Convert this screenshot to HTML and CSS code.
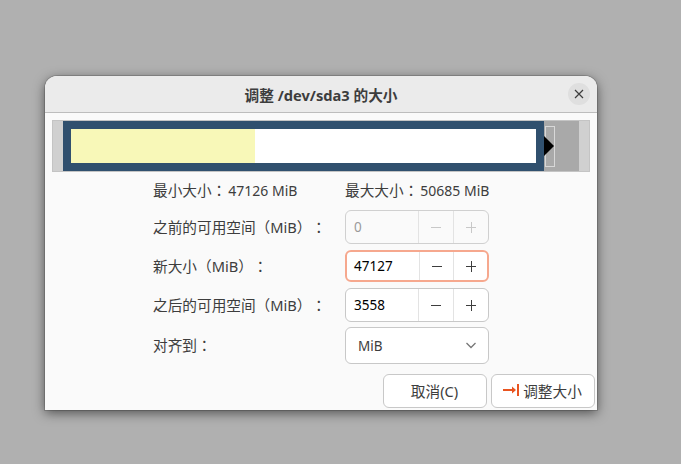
FILE: index.html
```html
<!DOCTYPE html>
<html lang="ja">
<head>
<meta charset="utf-8">
<title>调整 /dev/sda3 的大小</title>
<link rel="stylesheet" href="styles.css">
</head>
<body>
<div class="dialog">
  <header class="titlebar">
    <div class="title">调整 /dev/sda3 的大小</div>
    <div class="close">
      <svg width="10" height="10" viewBox="0 0 10 10"><path d="M1 1 9 9M9 1 1 9" stroke="#3d3d3d" stroke-width="1.2" fill="none"/></svg>
    </div>
  </header>
  <div class="content">
    <div class="graph">
      <div class="lead"></div>
      <div class="partition">
        <div class="inner"><div class="used"></div></div>
      </div>
      <div class="unalloc">
        <div class="handle"></div>
        <svg class="arrow" width="10" height="20" viewBox="0 0 10 20"><path d="M0 0 10 10 0 20Z" fill="#000"/></svg>
      </div>
      <div class="trail"></div>
    </div>
    <div class="form">
      <div class="info"><span>最小大小：</span><span class="num">47126 MiB</span></div>
      <div class="info"><span>最大大小：</span><span class="num">50685 MiB</span></div>

      <div class="label row1">之前的可用空间（MiB）：</div>
      <div class="spin row1 disabled"><div class="value">0</div>
        <div class="step"><svg width="14" height="14" viewBox="0 0 14 14"><path d="M2 7.500H12" stroke="currentColor" stroke-width="1"/></svg></div>
        <div class="step"><svg width="14" height="14" viewBox="0 0 14 14"><path d="M2 7.500H12M7.500 2V13" stroke="currentColor" stroke-width="1"/></svg></div>
      </div>

      <div class="label row2">新大小（MiB）：</div>
      <div class="spin row2 focused"><div class="value">47127</div>
        <div class="step"><svg width="14" height="14" viewBox="0 0 14 14"><path d="M2 7.500H12" stroke="currentColor" stroke-width="1"/></svg></div>
        <div class="step"><svg width="14" height="14" viewBox="0 0 14 14"><path d="M2 7.500H12M7.500 2V13" stroke="currentColor" stroke-width="1"/></svg></div>
      </div>

      <div class="label row3">之后的可用空间（MiB）：</div>
      <div class="spin row3"><div class="value">3558</div>
        <div class="step"><svg width="14" height="14" viewBox="0 0 14 14"><path d="M2 7.500H12" stroke="currentColor" stroke-width="1"/></svg></div>
        <div class="step"><svg width="14" height="14" viewBox="0 0 14 14"><path d="M2 7.500H12M7.500 2V13" stroke="currentColor" stroke-width="1"/></svg></div>
      </div>

      <div class="label row4">对齐到：</div>
      <div class="select row4"><span>MiB</span>
        <svg width="10" height="7" viewBox="0 0 10 7"><path d="M.5 1 5 5.500 9.500 1" stroke="#777" stroke-width="1.300" fill="none"/></svg>
      </div>
    </div>
    <div class="actions">
      <button class="btn">取消(C)</button>
      <button class="btn">
        <svg width="16" height="12" viewBox="0 0 16 12"><path d="M0 6H10" stroke="#e95420" stroke-width="2"/><path d="M9 2.500 13 6 9 9.500Z" fill="#e95420"/><path d="M15 0V12" stroke="#e95420" stroke-width="2"/></svg>
        <span>调整大小</span>
      </button>
    </div>
  </div>
</div>
</body>
</html>
```

FILE: styles.css
```css
* { box-sizing: border-box; }
html, body { margin: 0; height: 100%; }
body {
  background: #b0b0b0;
  font-family: "Noto Sans", "Noto Sans CJK JP", sans-serif;
  font-size: 14.67px;
  color: #3d3d3d;
  text-spacing-trim: space-all;
  overflow: hidden;
}
.dialog {
  position: absolute;
  left: 45px;
  top: 76px;
  width: 552px;
  height: 334px;
  background: #fafafa;
  border-radius: 12px 12px 0 0;
  box-shadow: 0 3px 12px rgba(0,0,0,.55), 0 0 0 1px rgba(0,0,0,.15);
  display: flex;
  flex-direction: column;
}
.titlebar {
  height: 37px;
  flex: none;
  background: #ebebeb;
  border-bottom: 1px solid #bdbdbd;
  border-radius: 12px 12px 0 0;
  display: flex;
  align-items: center;
  justify-content: center;
  position: relative;
}
.title { font-weight: 700; color: #3d3d3d; }
.close {
  position: absolute;
  right: 7px;
  top: 7px;
  width: 22px;
  height: 22px;
  border-radius: 50%;
  background: #dfdfdf;
  display: flex;
  align-items: center;
  justify-content: center;
}
.content { padding: 7px 2px 2px 7px; display: flex; flex-direction: column; flex: 1; }
.graph {
  height: 52px;
  width: 538px;
  border: 1px solid #c4c4c4;
  background: #d0d0d0;
  display: flex;
  flex: none;
}
.lead { width: 10px; flex: none; }
.partition { width: 481px; flex: none; background: #30506e; padding: 8px; }
.inner { height: 34px; background: #fff; }
.used { width: 184px; height: 100%; background: #f8f8b8; }
.unalloc { width: 35px; flex: none; background: #a9a9a9; position: relative; }
.handle {
  position: absolute;
  left: 1px;
  top: 5px;
  width: 10px;
  height: 41px;
  border: 1px solid #d8d8d8;
}
.arrow { position: absolute; left: 0; top: 15px; }
.trail { flex: 1; }
.form {
  display: grid;
  grid-template-columns: 192px 144px;
  grid-template-rows: 32px 34px 32px 33px 37px;
  row-gap: 6px;
  margin-left: 101px;
  align-items: start;
}
.info { white-space: nowrap; padding-top: 6px; line-height: 24px; }
.info .num { font-size: 14px; margin-left: 2px; }
.row1 { height: 34px; }
.row2 { height: 32px; }
.row3 { height: 34px; }
.row4 { height: 37px; }
.label { display: flex; align-items: center; padding-bottom: 2px; }
.spin {
  display: flex;
  border: 1px solid #c8c8c8;
  border-radius: 6px;
  background: #fff;
  color: #000;
}
.spin .value { width: 72px; padding-left: 8px; display: flex; align-items: center; font-size: 13.5px; }
.step {
  width: 35px;
  flex: 1;
  border-left: 1px solid #e3e3e3;
  color: #3d3d3d;
  display: flex;
  align-items: center;
  justify-content: center;
}
.spin.disabled { background: #fafafa; border-color: #d0d0d0; }
.spin.disabled .value { color: #9a9a9a; }
.spin.disabled .step { color: #c8c8c8; }
.spin.focused { border: 2px solid #f6a88e; }
.spin.focused .value { padding-left: 7px; }
.select {
  display: flex;
  align-items: center;
  justify-content: space-between;
  padding: 0 12px;
  border: 1px solid #c8c8c8;
  border-radius: 6px;
  background: #fff;
}
.select span { font-size: 13.5px; }
.actions { display: flex; justify-content: flex-end; gap: 4px; margin-top: 10px; }
.btn {
  width: 104px;
  height: 34px;
  font: inherit;
  color: #3d3d3d;
  border: 1px solid #c8c8c8;
  border-radius: 6px;
  background: #fff;
  display: flex;
  align-items: center;
  justify-content: center;
  gap: 4px;
  padding: 0 1px 2px 0;
}
```
